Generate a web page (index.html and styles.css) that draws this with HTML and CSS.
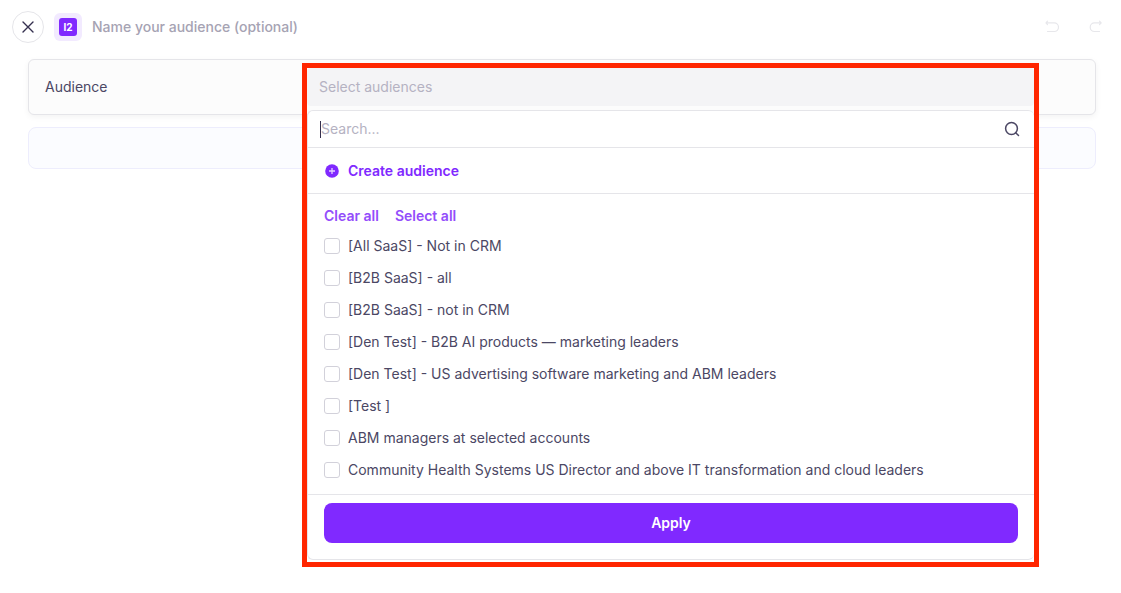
FILE: index.html
```html
<!DOCTYPE html>
<html lang="en">
<head>
<meta charset="utf-8">
<meta name="viewport" content="width=device-width, initial-scale=1">
<title>New audience</title>
<link rel="stylesheet" href="styles.css">
</head>
<body>
<header class="topbar">
  <button class="close" type="button" aria-label="Close">
    <svg width="12" height="12" viewBox="0 0 12 12" fill="none" stroke="currentColor" stroke-width="1.4" stroke-linecap="round"><path d="M1 1l10 10M11 1L1 11"/></svg>
  </button>
  <span class="badge"><span class="badge-mark">I2</span></span>
  <input class="name" type="text" placeholder="Name your audience (optional)" aria-label="Audience name">
  <div class="history">
    <button type="button" aria-label="Undo" disabled>
      <svg width="14" height="14" viewBox="0 0 14 14" fill="none" stroke="currentColor" stroke-width="1.2" stroke-linecap="round" stroke-linejoin="round"><path d="M2.500 1.200L1 2.900l1.500 1.700M1 2.900h8.200a3.900 3.900 0 0 1 0 8.600H2.500"/></svg>
    </button>
    <button type="button" aria-label="Redo" disabled>
      <svg width="14" height="14" viewBox="0 0 14 14" fill="none" stroke="currentColor" stroke-width="1.2" stroke-linecap="round" stroke-linejoin="round"><path d="M10.500 1.200l1.700 1.700-1.700 1.700M12.200 2.900H5.500a3.900 3.900 0 0 0 0 8.600H10.500"/></svg>
    </button>
  </div>
</header>
<main class="content">
  <section class="card">
    <span class="card-label">Audience</span>
    <div class="picker">
      <button class="select" type="button" aria-expanded="true">Select audiences</button>
      <div class="panel">
        <div class="search">
          <span class="caret"></span>
          <input type="text" placeholder="Search..." aria-label="Search audiences">
          <svg width="16" height="16" viewBox="0 0 16 16" fill="none" stroke="currentColor" stroke-width="1.5" stroke-linecap="round"><circle cx="7.500" cy="7.500" r="5.900"/><path d="M11.700 11.700l2.800 2.800"/></svg>
        </div>
        <button class="create" type="button">
          <svg width="16" height="16" viewBox="0 0 16 16"><circle cx="8" cy="8" r="6.800" fill="currentColor"/><path d="M8 5v6M5 8h6" stroke="#e4d2ff" stroke-width="1.300"/></svg>
          Create audience
        </button>
        <div class="bulk">
          <button type="button">Clear all</button>
          <button type="button">Select all</button>
        </div>
        <div class="options">
          <label><input type="checkbox">[All SaaS] - Not in CRM</label>
          <label><input type="checkbox">[B2B SaaS] - all</label>
          <label><input type="checkbox">[B2B SaaS] - not in CRM</label>
          <label><input type="checkbox">[Den Test] - B2B AI products — marketing leaders</label>
          <label><input type="checkbox">[Den Test] - US advertising software marketing and ABM leaders</label>
          <label><input type="checkbox">[Test ]</label>
          <label><input type="checkbox">ABM managers at selected accounts</label>
          <label><input type="checkbox">Community Health Systems US Director and above IT transformation and cloud leaders</label>
        </div>
        <div class="footer"><button class="apply" type="button">Apply</button></div>
      </div>
    </div>
  </section>
  <section class="drop"></section>
</main>
</body>
</html>
```
FILE: styles.css
```css
* { box-sizing: border-box; }
body {
  margin: 0;
  min-height: 100vh;
  background: #fff;
  color: #4b4764;
  font: 14px/20px Inter, "Liberation Sans", sans-serif;
}
button, input { font: inherit; color: inherit; }
button { padding: 0; border: 0; background: none; cursor: pointer; }
input[type="text"] { padding: 0; border: 0; outline: 0; background: none; min-width: 0; flex: 1; }
svg { display: block; flex: none; }

.topbar {
  display: flex;
  align-items: center;
  height: 54px;
  padding: 0 18px 0 12px;
}
.close {
  display: grid;
  place-items: center;
  width: 32px;
  height: 32px;
  border: 1px solid #e5e5e9;
  border-radius: 50%;
  color: #35304f;
}
.badge {
  display: grid;
  place-items: center;
  width: 28px;
  height: 28px;
  margin: 0 10px;
  border-radius: 6px;
  background: #f2eaff;
}
.badge-mark {
  width: 18px;
  height: 18px;
  border-radius: 3px;
  background: #8029ff;
  color: #fff;
  font-size: 10px;
  font-weight: 700;
  line-height: 18px;
  text-align: center;
}
.name { font-weight: 500; }
.name::placeholder { color: #a6a3b3; opacity: 1; }
.history { display: flex; gap: 30px; color: #e7e7eb; }

.content {
  display: flex;
  flex-direction: column;
  gap: 12px;
  padding: 5px 25px 0 28px;
}
.card {
  position: relative;
  display: flex;
  align-items: center;
  min-height: 56px;
  padding: 0 16px;
  border: 1px solid #e5e5e9;
  border-radius: 6px;
  background: #fcfcfc;
  box-shadow: 0 2px 6px rgba(0, 0, 0, 0.05);
}
.drop {
  min-height: 42px;
  border: 1px solid #ededfd;
  border-radius: 8px;
  background: #fbfcff;
}

.picker {
  position: absolute;
  z-index: 1;
  top: 3px;
  left: 273px;
  right: 56px;
  display: flex;
  flex-direction: column;
  gap: 4px;
  padding-bottom: 2px;
  border: 5px solid #ff2600;
}
.select {
  height: 38px;
  padding: 0 12px;
  border-radius: 4px;
  background: #f4f4f6;
  color: #b5b2c2;
  text-align: left;
}
.panel {
  border: 1px solid #e5e5e9;
  border-right: 0;
  border-radius: 6px;
  background: #fff;
}
.search {
  display: flex;
  align-items: center;
  height: 37px;
  padding: 0 14px 0 12px;
  border-bottom: 1px solid #e5e5e9;
}
.search input::placeholder { color: #b5b2c2; opacity: 1; }
.caret { width: 1px; height: 17px; background: #35304f; }
.create {
  display: flex;
  align-items: center;
  gap: 8px;
  width: 100%;
  height: 46px;
  padding: 0 16px;
  border-bottom: 1px solid #e5e5e9;
  color: #8029ff;
  font-weight: 600;
}
.bulk {
  display: flex;
  gap: 16px;
  padding: 12px 16px 4px;
}
.bulk button { color: #934dfb; font-weight: 600; }
.options { padding-bottom: 8px; }
.options label {
  display: flex;
  align-items: center;
  gap: 8px;
  height: 32px;
  padding: 0 16px;
}
.options input {
  appearance: none;
  flex: none;
  width: 16px;
  height: 16px;
  margin: 0;
  border: 1px solid #d2d1da;
  border-radius: 3px;
  background: #fff;
}
.footer { padding: 8px 16px 16px; border-top: 1px solid #e5e5e9; }
.apply {
  width: 100%;
  height: 40px;
  border-radius: 8px;
  background: #8029ff;
  color: #fff;
  font-weight: 600;
}
```
